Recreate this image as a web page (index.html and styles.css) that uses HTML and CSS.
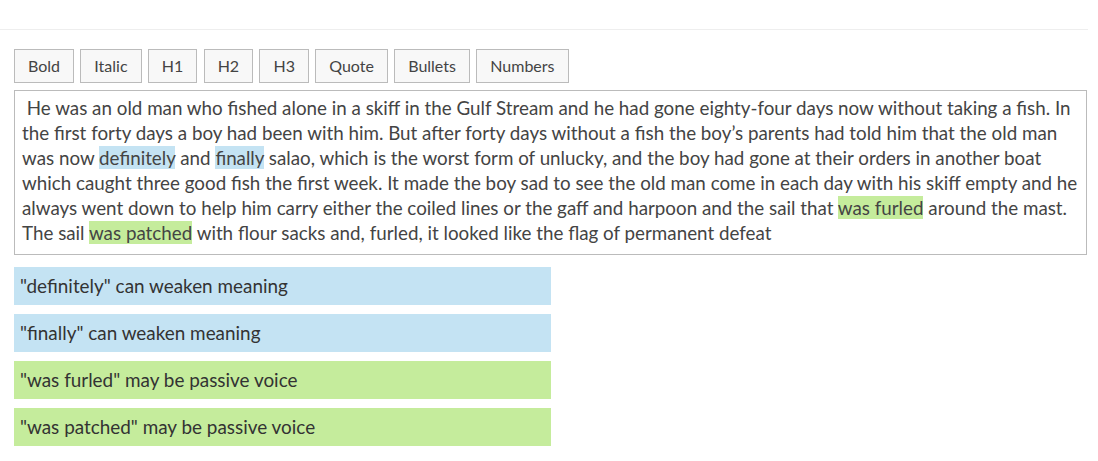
FILE: index.html
```html
<!DOCTYPE html>
<html>
<head>
<meta charset="utf-8">
<link rel="stylesheet" href="styles.css">
</head>
<body>
<div class="topbar"></div>
<div class="page">
  <div class="toolbar">
    <button class="btn">Bold</button>
    <button class="btn">Italic</button>
    <button class="btn">H1</button>
    <button class="btn">H2</button>
    <button class="btn">H3</button>
    <button class="btn">Quote</button>
    <button class="btn">Bullets</button>
    <button class="btn">Numbers</button>
  </div>
  <div class="editor">&nbsp;He was an old man who fished alone in a skiff in the Gulf Stream and he had gone eighty-four days now without taking a fish. In the first forty days a boy had been with him. But after forty days without a fish the boy’s parents had told him that the old man was now <span class="hl-blue">definitely</span> and <span class="hl-blue">finally</span> salao, which is the worst form of unlucky, and the boy had gone at their orders in another boat which caught three good fish the first week. It made the boy sad to see the old man come in each day with his skiff empty and he always went down to help him carry either the coiled lines or the gaff and harpoon and the sail that <span class="hl-green">was furled</span> around the mast. The sail <span class="hl-green">was patched</span> with flour sacks and, furled, it looked like the flag of permanent defeat</div>
  <div class="suggestions">
    <div class="sugg blue">"definitely" can weaken meaning</div>
    <div class="sugg blue">"finally" can weaken meaning</div>
    <div class="sugg green">"was furled" may be passive voice</div>
    <div class="sugg green">"was patched" may be passive voice</div>
  </div>
</div>
</body>
</html>
```

FILE: styles.css
```css
html, body {
  margin: 0;
  padding: 0;
  background: #fff;
  font-family: Lato, "Open Sans", sans-serif;
  color: #444;
}

.topbar {
  height: 29px;
  border-bottom: 1px solid #eeeeee;
  margin-right: 10px;
}

.page {
  padding: 19px 11px 0 14px;
}

.toolbar {
  display: flex;
  gap: 6.3px;
}

.btn {
  box-sizing: border-box;
  font-family: Lato, sans-serif;
  font-size: 16px;
  color: #444;
  background: #f8f8f8;
  border: 1px solid #bbbbbb;
  height: 34px;
  padding: 0 13px 1px;
  margin: 0;
  line-height: 30px;
}

.editor {
  margin-top: 7px;
  border: 1px solid #bbbbbb;
  padding: 4px 7px 9px;
  font-size: 18.8px;
  line-height: 25px;
  color: #444;
}

.hl-blue {
  background: #c4e3f3;
}

.hl-green {
  background: #c5ec9c;
}

.suggestions {
  margin-top: 12px;
  display: flex;
  flex-direction: column;
  gap: 9px;
  width: 537px;
}

.sugg {
  box-sizing: border-box;
  height: 38px;
  padding: 0 6px 1px;
  display: flex;
  align-items: center;
  font-size: 18.9px;
  color: #333;
}

.sugg.blue {
  background: #c4e3f3;
}

.sugg.green {
  background: #c5ec9c;
}
```
